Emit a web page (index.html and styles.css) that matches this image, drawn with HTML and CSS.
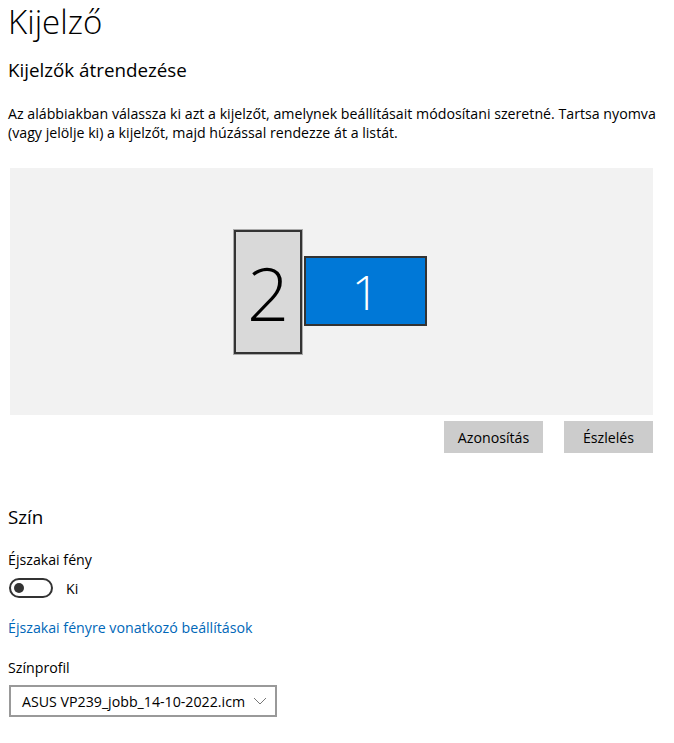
FILE: index.html
```html
<!DOCTYPE html>
<html lang="hu">
<head>
    <meta charset="UTF-8">
    <title>Kijelző</title>
    <link rel="stylesheet" href="styles.css">
</head>
<body>
<div class="page">
    <h1 class="page-title">Kijelző</h1>
    <h2 class="section-title">Kijelzők átrendezése</h2>
    <p class="desc">Az alábbiakban válassza ki azt a kijelzőt, amelynek beállításait módosítani szeretné. Tartsa nyomva (vagy jelölje ki) a kijelzőt, majd húzással rendezze át a listát.</p>

    <div class="arrange">
        <div class="monitor monitor-2">2</div>
        <div class="monitor monitor-1">1</div>
    </div>
    <div class="actions">
        <button class="btn btn-identify">Azonosítás</button>
        <button class="btn btn-detect">Észlelés</button>
    </div>

    <h2 class="section-title color-title">Szín</h2>
    <div class="label night-label">Éjszakai fény</div>
    <div class="toggle-row">
        <span class="toggle"><span class="knob"></span></span>
        <span class="toggle-text">Ki</span>
    </div>
    <a class="link" href="#">Éjszakai fényre vonatkozó beállítások</a>
    <div class="label profile-label">Színprofil</div>
    <div class="select">
        <span>ASUS VP239_jobb_14-10-2022.icm</span>
        <svg width="14" height="8" viewBox="0 0 14 8"><path d="M1 1 L7 7 L13 1" fill="none" stroke="#777" stroke-width="1"/></svg>
    </div>
</div>
</body>
</html>
```

FILE: styles.css
```css
* {
    margin: 0;
    padding: 0;
    box-sizing: border-box;
}

body {
    font-family: "Open Sans", "Liberation Sans", sans-serif;
    font-size: 14.2px;
    color: #000;
    background: #fff;
}

.page {
    padding-left: 8px;
    width: 674px;
}

.page-title {
    font-weight: 300;
    font-size: 33px;
    line-height: 44px;
}

.section-title {
    font-weight: 400;
    font-size: 18.8px;
    line-height: 28px;
    margin-top: 12px;
}

.desc {
    line-height: 19px;
    margin-top: 20px;
    width: 652px;
}

.arrange {
    position: relative;
    margin-top: 26px;
    margin-left: 2px;
    width: 643px;
    height: 247px;
    background: #f2f2f2;
}

.monitor {
    position: absolute;
    display: flex;
    align-items: center;
    justify-content: center;
    border: 2px solid #333;
    font-weight: 300;
}

.monitor-2 {
    left: 224px;
    top: 62px;
    width: 68px;
    height: 124px;
    background: #d9d9d9;
    font-size: 74px;
    outline: 1px solid #aaa;
}

.monitor-1 {
    left: 294px;
    top: 88px;
    width: 123px;
    height: 70px;
    background: #0078d7;
    color: #fff;
    font-size: 48px;
}

.actions {
    display: flex;
    justify-content: flex-end;
    gap: 21px;
    width: 645px;
    margin-top: 6px;
}

.btn {
    height: 32px;
    border: none;
    background: #cccccc;
    font-family: inherit;
    font-size: 14.2px;
    color: #000;
}

.btn-identify {
    width: 99px;
}

.btn-detect {
    width: 89px;
}

.color-title {
    margin-top: 50px;
}

.label {
    line-height: 19px;
}

.night-label {
    margin-top: 19px;
}

.toggle-row {
    display: flex;
    align-items: center;
    gap: 13px;
    margin-top: 9px;
    height: 20px;
}

.toggle {
    display: flex;
    align-items: center;
    width: 44px;
    height: 20px;
    border: 2px solid #333;
    border-radius: 10px;
    padding-left: 3px;
    margin-left: 1px;
}

.knob {
    width: 10px;
    height: 10px;
    border-radius: 50%;
    background: #333;
}

.link {
    display: block;
    margin-top: 20px;
    line-height: 19px;
    color: #0067b8;
    text-decoration: none;
}

.profile-label {
    margin-top: 21px;
}

.select {
    display: flex;
    align-items: center;
    justify-content: space-between;
    margin-top: 8px;
    margin-left: 1px;
    width: 268px;
    height: 32px;
    border: 2px solid #999;
    padding: 0 8px 0 11px;
    white-space: nowrap;
}
```
